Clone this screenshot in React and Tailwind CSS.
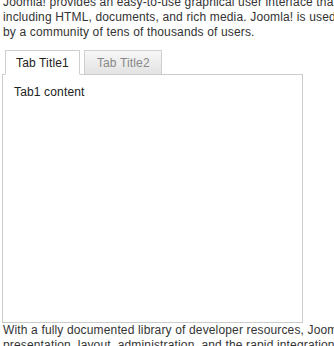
export default function App() {
  return (
    <div
      className="w-[334px] h-[346px] overflow-hidden bg-white text-[#333] text-[12px] leading-[15px] tracking-[0.15px] pl-[2px]"
      style={{ fontFamily: '"Liberation Sans", Arial, sans-serif' }}
    >
      <p className="-mt-[5px] mb-[10px] whitespace-nowrap pl-px">
        Joomla! provides an easy-to-use graphical user interface that simplifies
        <br />
        including HTML, documents, and rich media. Joomla! is used
        <br />
        by a community of tens of thousands of users.
      </p>
      <div className="w-[301px]">
        <div className="flex items-start gap-[4px] pl-[3px] -mb-px relative z-10">
          <div className="bg-white border border-b-white border-[#cfcfcf] border-b pl-[10px] pr-[10px] pt-[5px] pb-[3px] text-[#222]">
            Tab Title1
          </div>
          <div className="bg-gradient-to-b from-[#f7f7f7] to-[#e3e3e3] border-t border-x border-[#cfcfcf] pl-[12px] pr-[11px] pt-[5px] pb-[3px] text-[#888]">
            Tab Title2
          </div>
        </div>
        <div className="h-[249px] border border-[#cccccc] p-[10px] pl-[11px] text-[#222]">
          Tab1 content
        </div>
      </div>
      <p className="whitespace-nowrap pl-px">
        With a fully documented library of developer resources, Joomla allows
        <br />
        presentation, layout, administration, and the rapid integration of
      </p>
    </div>
  );
}
